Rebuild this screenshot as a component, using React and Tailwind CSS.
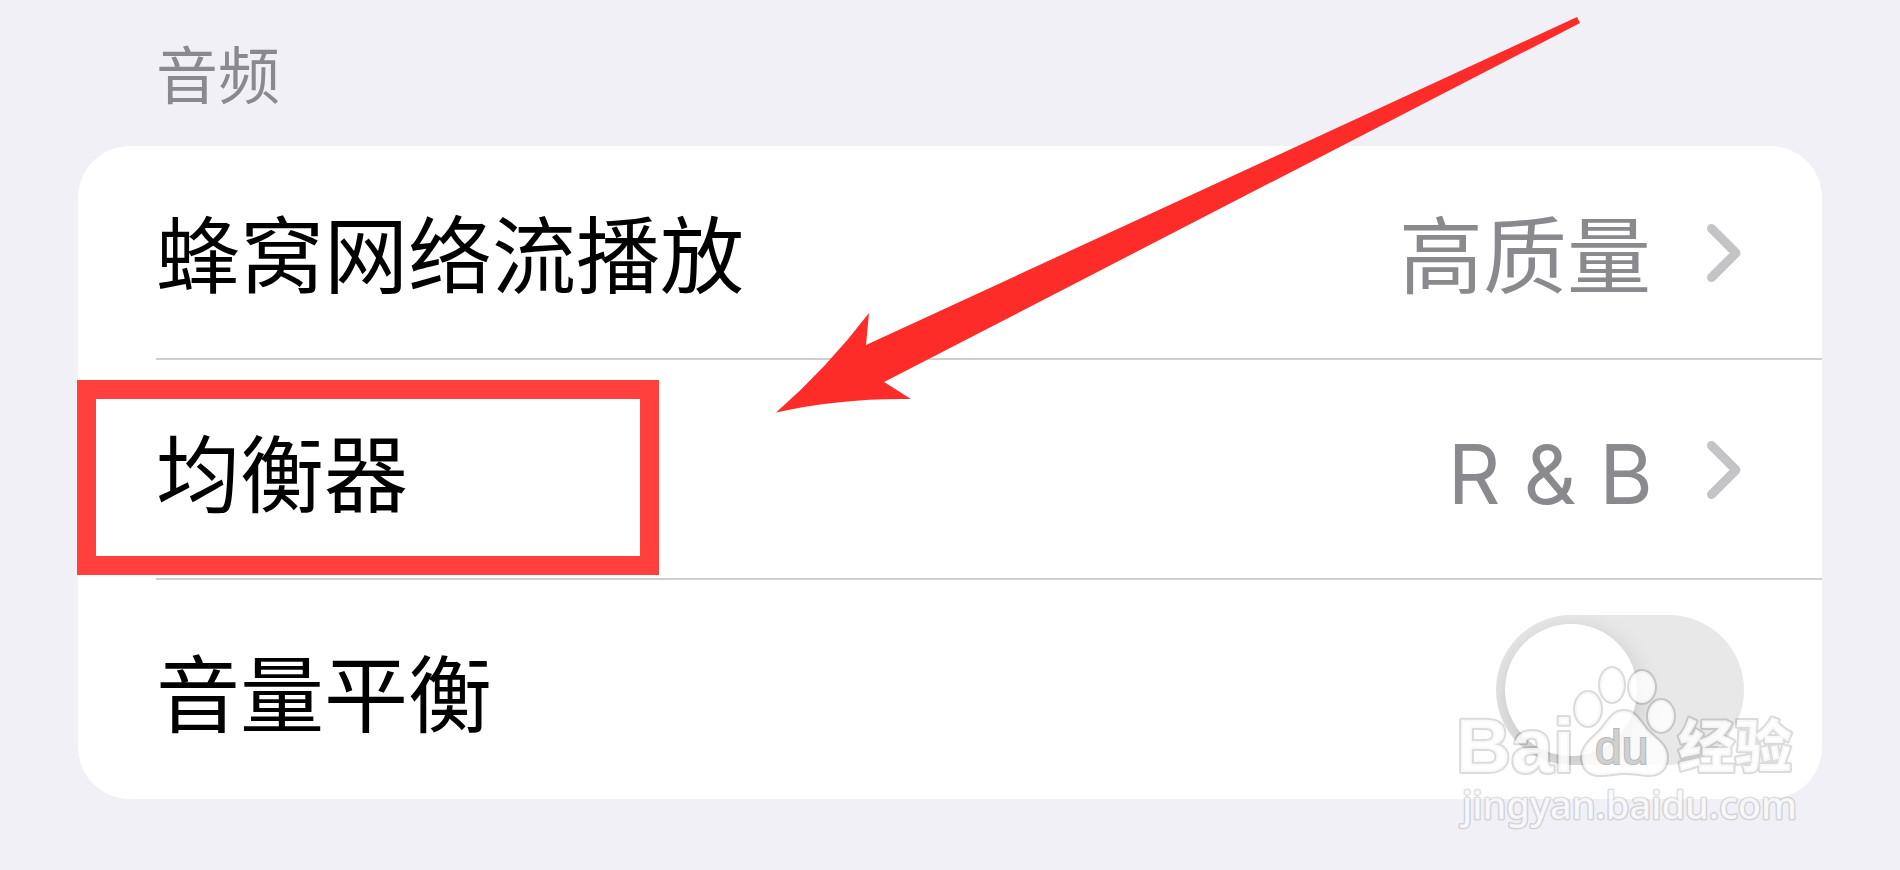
import { useState } from 'react'

function Chevron() {
  return (
    <svg className="h-[60px] w-[36px] shrink-0" viewBox="0 0 36 60" fill="none" stroke="#c4c4c6" strokeWidth="9" strokeLinecap="round" strokeLinejoin="round">
      <path d="M5.500 6.500L30 31L5.500 55.500" />
    </svg>
  )
}

function LinkRow({ label, value, className, labelClass = '', valueClass = '' }) {
  return (
    <button type="button" className={`flex w-full items-center pr-[80px] text-left cursor-pointer ${className}`}>
      <span className={`flex-1 ${labelClass}`}>{label}</span>
      <span className={`text-[#8a8a8e] ${valueClass}`}>{value}</span>
      <Chevron />
    </button>
  )
}

function ToggleRow({ label, className }) {
  const [on, setOn] = useState(false)
  return (
    <div className={`flex items-center justify-between pr-[78px] ${className}`}>
      <label htmlFor="sound-check">{label}</label>
      <span className={`relative flex h-[150px] w-[248px] items-center overflow-hidden rounded-full p-[9px] ${on ? 'justify-end bg-[#34c759]' : 'bg-[#e8e8e8]'}`}>
        <input
          id="sound-check"
          type="checkbox"
          role="switch"
          checked={on}
          onChange={e => setOn(e.target.checked)}
          className="absolute inset-0 size-full cursor-pointer appearance-none"
        />
        <span className="pointer-events-none size-[132px] rounded-full bg-white shadow-[0_8px_28px_rgba(0,0,0,0.16)]" />
      </span>
    </div>
  )
}

function Arrow() {
  return (
    <svg className="pointer-events-none absolute left-[776px] top-[17px] h-[396px] w-[804px]" viewBox="776 17 804 396" fill="#fe2c28">
      <path d="M776 412.500Q827 368 869 313L866 345L1577 17L1580 23L884 382L911 399Q840 398 776 412.500Z" />
    </svg>
  )
}

function Watermark() {
  return (
    <svg className="pointer-events-none absolute bottom-[30px] right-[90px] h-[180px] w-[360px]" viewBox="1450 660 360 180">
      <g fill="#fff" fillOpacity="0.8" stroke="#000" strokeOpacity="0.14" strokeWidth="4" strokeLinejoin="round" style={{ paintOrder: 'stroke' }}>
        <ellipse cx="1588" cy="709" rx="13" ry="17" />
        <ellipse cx="1612" cy="685" rx="12" ry="17" />
        <ellipse cx="1642" cy="687" rx="13" ry="16" />
        <ellipse cx="1661" cy="716" rx="13" ry="16" />
        <path d="M1624 711C1636 711 1640 722 1648 731C1656 739 1667 745 1667 757C1667 770 1658 776 1647 775C1638 774 1632 773 1624 773C1616 773 1610 775 1601 775C1590 776 1582 769 1582 757C1582 746 1592 739 1600 731C1608 722 1612 711 1624 711Z" />
        <text x="1456" y="772" className="text-[76px] font-bold font-['Liberation_Sans',sans-serif]">Bai</text>
        <text x="1678" y="767" className="text-[57px] font-black font-['Noto_Sans_CJK_SC',sans-serif]">经验</text>
        <text x="1462" y="819" strokeWidth="3" className="text-[38px] font-medium font-['Noto_Sans',sans-serif]">jingyan.baidu.com</text>
      </g>
      <text x="1595" y="764" fill="#d0d0d0" stroke="#b8b8b8" strokeWidth="2" className="text-[48px] font-['Liberation_Sans',sans-serif]" style={{ paintOrder: 'stroke' }}>du</text>
    </svg>
  )
}

export default function App() {
  return (
    <main className="relative min-h-screen overflow-hidden bg-[#f1f0f6] px-[78px]">
      <h2 className="flex h-[146px] items-center pb-[2px] pl-[78px] text-[62px] leading-none text-[#8a8a8e] font-['Noto_Sans_CJK_SC',sans-serif]">音频</h2>
      <section className="relative rounded-[52px] bg-white pl-[78px] text-[84px] leading-none text-black font-['Noto_Sans_CJK_SC',sans-serif]">
        <LinkRow label="蜂窝网络流播放" value="高质量" className="h-[214px] border-b-2 border-[#cfcfd1]" labelClass="pb-[2px]" valueClass="pb-[2px] mr-[55px]" />
        <LinkRow label="均衡器" value="R & B" className="h-[220px] border-b-2 border-[#cfcfd1]" labelClass="pt-[2px]" valueClass="mr-[53px] pt-3 text-[82px] font-['Inter',sans-serif]" />
        <ToggleRow label="音量平衡" className="h-[219px]" />
        <div className="pointer-events-none absolute -left-px top-[234px] h-[195px] w-[582px] border-[19px] border-[#ff403d]" />
      </section>
      <Arrow />
      <Watermark />
    </main>
  )
}
